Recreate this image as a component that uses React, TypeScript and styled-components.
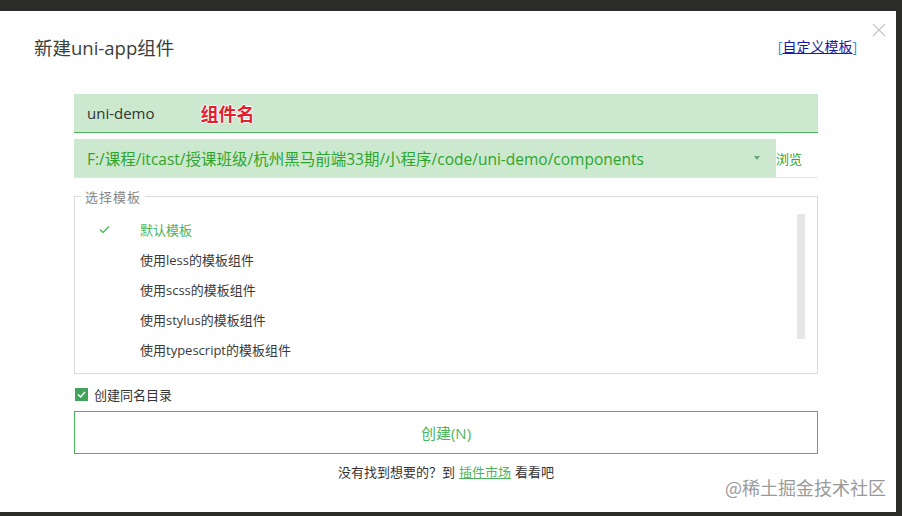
import React from "react";
import styled, { createGlobalStyle } from "styled-components";

const GlobalStyle = createGlobalStyle`
  html, body {
    margin: 0;
    padding: 0;
    background: #2c2c29;
  }
  body {
    font-family: "Open Sans", "Noto Sans CJK SC", sans-serif;
  }
`;

const Page = styled.div`
  width: 902px;
  height: 516px;
  padding-top: 11px;
  box-sizing: border-box;
  overflow: hidden;
`;

const Dialog = styled.div`
  position: relative;
  width: 896px;
  height: 501px;
  background: #fff;
  display: flex;
  flex-direction: column;
`;

const Header = styled.div`
  height: 72px;
  display: flex;
  align-items: center;
  justify-content: space-between;
  padding: 0 39px 0 34px;
`;

const Title = styled.div`
  font-size: 18.5px;
  color: #3a3f3a;
`;

const CustomLink = styled.a`
  font-size: 14px;
  color: #1a1aa6;
  text-decoration: underline;
  margin-top: -2px;
  span {
    color: #3b8ed8;
  }
`;

const Close = styled.div`
  position: absolute;
  top: 10px;
  right: 9px;
  width: 16px;
  height: 16px;
`;

const Body = styled.div`
  display: flex;
  flex-direction: column;
  padding-left: 74px;
  width: 744px;
`;

const NameField = styled.div`
  margin-top: 11px;
  height: 38px;
  background: #cce8cf;
  border-bottom: 1px solid #4db560;
  display: flex;
  align-items: center;
  padding-left: 13px;
  font-size: 15px;
  color: #333;
`;

const Callout = styled.span`
  margin-left: 46px;
  font-size: 18px;
  font-weight: 700;
  color: #e3202a;
  text-shadow: 1px 0 0 #fff, -1px 0 0 #fff, 0 1px 0 #fff, 0 -1px 0 #fff;
  font-family: "Noto Sans CJK SC", sans-serif;
`;

const PathRow = styled.div`
  margin-top: 6px;
  display: flex;
  border-bottom: 1px solid #e3e3e3;
`;

const PathField = styled.div`
  width: 702px;
  height: 38px;
  background: #cce8cf;
  display: flex;
  align-items: center;
  padding: 0 13px;
  box-sizing: border-box;
  font-size: 15.5px;
  color: #2ea62e;
`;

const PathText = styled.span`
  flex: 1;
`;

const Arrow = styled.span`
  width: 0;
  height: 0;
  border-left: 3px solid transparent;
  border-right: 3px solid transparent;
  border-top: 4px solid #6aa67a;
  margin-right: 3px;
`;

const Browse = styled.span`
  font-size: 13px;
  color: #2ea62e;
  display: flex;
  align-items: center;
  height: 38px;
`;

const Fieldset = styled.fieldset`
  margin: 9px 0 0;
  padding: 0;
  border: 1px solid #dcdcdc;
  height: 187px;
  box-sizing: border-box;
  position: relative;
  min-width: 0;
`;

const Legend = styled.legend`
  margin-left: 6px;
  padding: 0 4px;
  font-size: 13px;
  color: #888;
  letter-spacing: 1px;
`;

const List = styled.div`
  display: flex;
  flex-direction: column;
  padding-top: 8px;
`;

const Item = styled.div<{ $active?: boolean }>`
  height: 30px;
  display: flex;
  align-items: center;
  font-size: 13px;
  color: ${(p) => (p.$active ? "#4cb55a" : "#3a3a3a")};
`;

const CheckCol = styled.span`
  width: 65px;
  padding-left: 24px;
  box-sizing: border-box;
  display: flex;
  align-items: center;
`;

const ScrollThumb = styled.div`
  position: absolute;
  top: 8px;
  right: 12px;
  width: 8px;
  height: 125px;
  background: #e6e6e6;
`;

const OptionRow = styled.label`
  margin-top: 12px;
  display: flex;
  align-items: center;
  gap: 6px;
  font-size: 13px;
  color: #333;
  height: 16px;
`;

const Box = styled.span`
  width: 13px;
  height: 13px;
  background: #44a35a;
  display: flex;
  align-items: center;
  justify-content: center;
  margin-left: 1px;
`;

const CreateButton = styled.button`
  margin-top: 9px;
  height: 43px;
  background: #fff;
  border: 1px solid #4cb55a;
  color: #4cb55a;
  font-size: 15px;
  font-family: inherit;
`;

const Footer = styled.div`
  margin-top: 8px;
  text-align: center;
  font-size: 13px;
  color: #333;
  a {
    color: #4cb55a;
    text-decoration: underline;
    margin: 0 4px;
  }
`;

const Watermark = styled.div`
  position: absolute;
  right: 10px;
  bottom: 12px;
  font-size: 18px;
  color: #9a9a9a;
  font-family: "Noto Sans CJK SC", sans-serif;
`;

const templates = [
  "默认模板",
  "使用less的模板组件",
  "使用scss的模板组件",
  "使用stylus的模板组件",
  "使用typescript的模板组件",
];

export default function App() {
  return (
    <>
      <GlobalStyle />
      <Page>
        <Dialog>
          <Header>
            <Title>新建uni-app组件</Title>
            <CustomLink>
              <span>[</span>自定义模板<span>]</span>
            </CustomLink>
          </Header>
          <Close>
            <svg width="16" height="16" viewBox="0 0 16 16">
              <path d="M2 2 L14 14 M14 2 L2 14" stroke="#c4c4c4" strokeWidth="1.2" />
            </svg>
          </Close>
          <Body>
            <NameField>
              uni-demo
              <Callout>组件名</Callout>
            </NameField>
            <PathRow>
              <PathField>
                <PathText>F:/课程/itcast/授课班级/杭州黑马前端33期/小程序/code/uni-demo/components</PathText>
                <Arrow />
              </PathField>
              <Browse>浏览</Browse>
            </PathRow>
            <Fieldset>
              <Legend>选择模板</Legend>
              <List>
                {templates.map((t, i) => (
                  <Item key={t} $active={i === 0}>
                    <CheckCol>
                      {i === 0 && (
                        <svg width="11" height="9" viewBox="0 0 11 9">
                          <path d="M1 4.5 L4 7.5 L10 1.5" stroke="#4cb55a" strokeWidth="1.3" fill="none" />
                        </svg>
                      )}
                    </CheckCol>
                    {t}
                  </Item>
                ))}
              </List>
              <ScrollThumb />
            </Fieldset>
            <OptionRow>
              <Box>
                <svg width="9" height="7" viewBox="0 0 9 7">
                  <path d="M1 3.5 L3.5 6 L8 1" stroke="#fff" strokeWidth="1.4" fill="none" />
                </svg>
              </Box>
              创建同名目录
            </OptionRow>
            <CreateButton>创建(N)</CreateButton>
            <Footer>
              没有找到想要的？到<a>插件市场</a>看看吧
            </Footer>
          </Body>
          <Watermark>@稀土掘金技术社区</Watermark>
        </Dialog>
      </Page>
    </>
  );
}
